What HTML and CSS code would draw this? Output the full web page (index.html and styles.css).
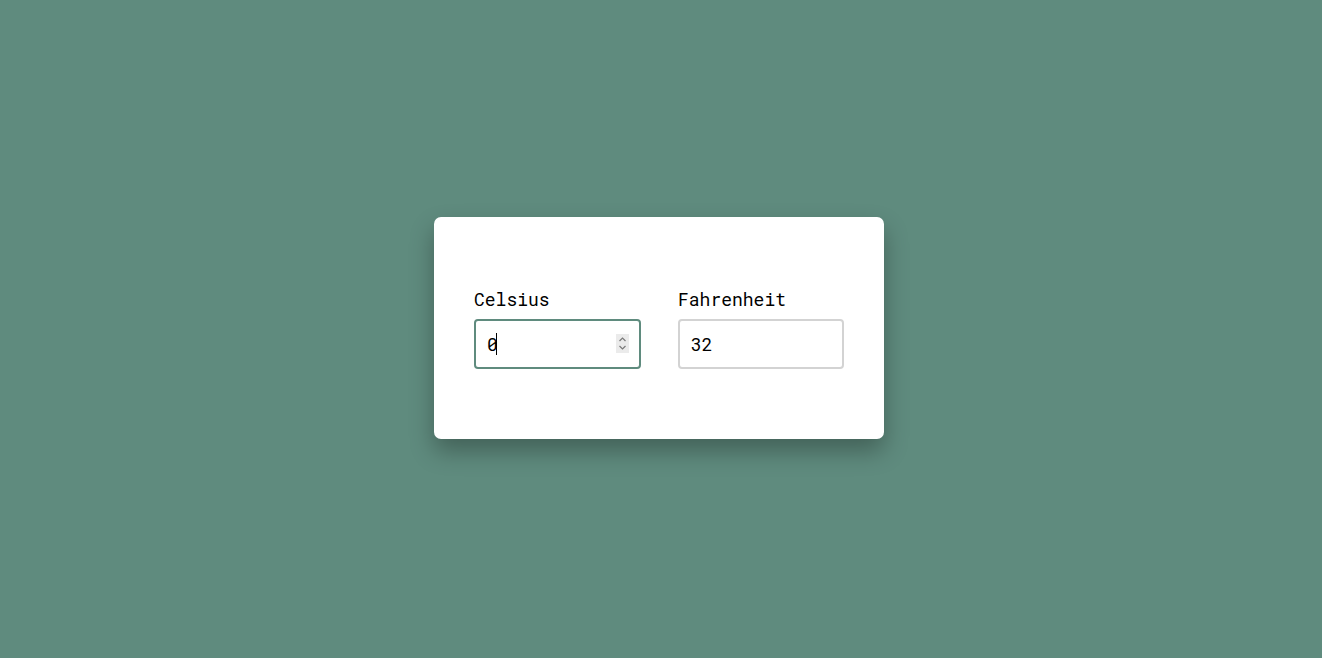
FILE: index.html
```html
<!DOCTYPE html>
<html lang="en">
<head>
<meta charset="utf-8">
<title>Temperature Converter</title>
<link rel="stylesheet" href="styles.css">
</head>
<body>
<main class="page">
  <section class="card">
    <div class="field">
      <label class="label" for="celsius">Celsius</label>
      <div class="input-wrap">
        <input class="input input-focused" id="celsius" type="number" value="0">
        <span class="caret"></span>
        <span class="spinner">
          <svg width="13" height="19" viewBox="0 0 13 19" aria-hidden="true">
            <polyline points="3.5,7 6.5,4 9.5,7" fill="none" stroke="#7a7a7a" stroke-width="1.2"/>
            <polyline points="3.5,12 6.5,15 9.5,12" fill="none" stroke="#7a7a7a" stroke-width="1.2"/>
          </svg>
        </span>
      </div>
    </div>
    <div class="field">
      <label class="label" for="fahrenheit">Fahrenheit</label>
      <div class="input-wrap">
        <input class="input input-narrow" id="fahrenheit" type="number" value="32">
      </div>
    </div>
  </section>
</main>
</body>
</html>
```
FILE: styles.css
```css
* { box-sizing: border-box; }
html, body { margin: 0; height: 100%; }
body {
  background: #5f8b7e;
  font-family: "Roboto Mono", "DejaVu Sans Mono", "Liberation Mono", monospace;
}
.page {
  height: 100%;
  display: flex;
  align-items: center;
  justify-content: center;
  padding-right: 4px;
  padding-bottom: 2px;
}
.card {
  width: 450px;
  height: 222px;
  background: #fff;
  border-radius: 7px;
  box-shadow: 0 12px 24px rgba(0, 0, 0, 0.3);
  display: flex;
  align-items: center;
  justify-content: center;
  gap: 37px;
}
.field {
  display: flex;
  flex-direction: column;
  gap: 9px;
}
.label {
  font-size: 18px;
  line-height: 22px;
  font-weight: 400;
  color: #000;
}
.input-wrap {
  position: relative;
}
.input {
  display: block;
  width: 167px;
  height: 50px;
  border: 2px solid #d3d3d3;
  border-radius: 4px;
  padding: 0 11px;
  font-family: inherit;
  font-size: 18px;
  font-weight: 400;
  color: #000;
  background: #fff;
  outline: none;
  caret-color: transparent;
  -moz-appearance: textfield;
}
.input-narrow {
  width: 166px;
}
.input::-webkit-inner-spin-button,
.input::-webkit-outer-spin-button {
  -webkit-appearance: none;
  margin: 0;
}
.input-focused {
  border-color: #5f8b7e;
}
.caret {
  position: absolute;
  left: 22px;
  top: 14px;
  width: 1px;
  height: 22px;
  background: #000;
}
.spinner {
  position: absolute;
  right: 12px;
  top: 15px;
  width: 13px;
  height: 19px;
  background: #ebebeb;
  display: flex;
}
```
